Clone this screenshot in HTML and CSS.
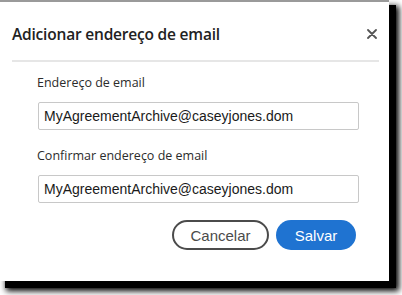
FILE: index.html
```html
<!DOCTYPE html>
<html lang="pt">
<head>
    <meta charset="UTF-8">
    <meta name="viewport" content="width=device-width, initial-scale=1.0">
    <title>Adicionar endereço de email</title>
    <link rel="stylesheet" href="styles.css">
</head>
<body>
    <div class="dialog">
        <header class="dialog-header">
            <h1 class="dialog-title">Adicionar endereço de email</h1>
            <button class="close-btn" aria-label="Fechar">
                <svg width="10" height="10" viewBox="0 0 10 10">
                    <path d="M1 1 L9 9 M9 1 L1 9" stroke="#555" stroke-width="1.8" stroke-linecap="round"/>
                </svg>
            </button>
        </header>

        <div class="dialog-body">
            <div class="field">
                <label class="field-label" for="email">Endereço de email</label>
                <input class="field-input" type="text" id="email" value="MyAgreementArchive@caseyjones.dom">
            </div>
            <div class="field">
                <label class="field-label" for="email-confirm">Confirmar endereço de email</label>
                <input class="field-input" type="text" id="email-confirm" value="MyAgreementArchive@caseyjones.dom">
            </div>

            <div class="actions">
                <button class="btn btn-secondary">Cancelar</button>
                <button class="btn btn-primary">Salvar</button>
            </div>
        </div>
    </div>
</body>
</html>
```

FILE: styles.css
```css
/* ダイアログ */
html, body {
    height: 295px;
}
body {
    margin: 0;
    background-color: #ffffff;
    font-family: "Open Sans", "Noto Sans", sans-serif;
    color: #2c2c2c;
    overflow: hidden;
}
.dialog {
    width: 389px;
    height: 281px;
    box-sizing: border-box;
    background-color: #ffffff;
    border-top: 2px solid #9a9a9a;
    box-shadow: 6px 6px 0 1px #000000, 8px 8px 6px 2px #000000;
}
.dialog-header {
    margin: 0 10px 0 12px;
    height: 58px;
    display: flex;
    align-items: center;
    justify-content: space-between;
    border-bottom: 2px solid #e6e6e6;
}
.dialog-title {
    margin: 0;
    font-size: 15.5px;
    font-weight: 600;
    letter-spacing: -0.2px;
    color: #222;
    padding-top: 6px;
}
.close-btn {
    background: none;
    border: none;
    padding: 0;
    margin-right: 2px;
    margin-top: 6px;
    cursor: pointer;
    display: flex;
}
.dialog-body {
    padding: 12px 0 0 38px;
}
.field {
    display: flex;
    flex-direction: column;
    width: 321px;
    margin-bottom: 17px;
}
.field-label {
    font-size: 12.5px;
    line-height: 18px;
    color: #2c2c2c;
    margin-left: -1px;
    margin-bottom: 10px;
}
.field-input {
    height: 28px;
    box-sizing: border-box;
    border: 1px solid #c8c8c8;
    border-radius: 2px;
    padding: 0 5px;
    font-family: "Liberation Sans", Arial, sans-serif;
    font-size: 14px;
    color: #1a1a1a;
}
.actions {
    width: 318px;
    display: flex;
    justify-content: flex-end;
    gap: 7px;
    margin-top: 2px;
}
.btn {
    height: 30px;
    border-radius: 15px;
    font-family: "Liberation Sans", Arial, sans-serif;
    font-size: 15px;
    cursor: pointer;
    box-sizing: border-box;
}
.btn-secondary {
    width: 97px;
    background-color: #ffffff;
    border: 2px solid #4b4b4b;
    color: #4b4b4b;
}
.btn-primary {
    width: 80px;
    background-color: #1f73d1;
    border: none;
    color: #ffffff;
}
```
